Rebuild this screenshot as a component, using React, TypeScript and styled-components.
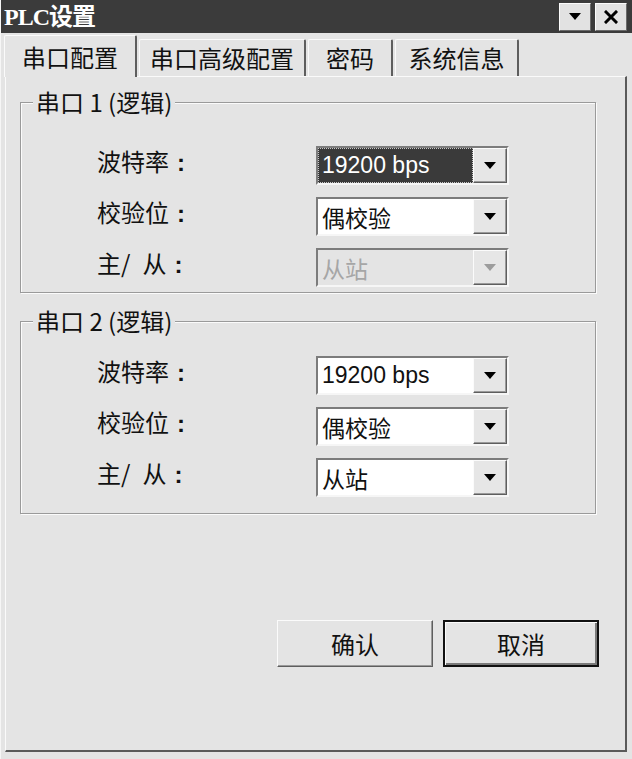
import React from "react";
import styled, { createGlobalStyle } from "styled-components";

const GlobalStyle = createGlobalStyle`
  html, body { margin: 0; padding: 0; background: #e4e4e4; }
  body { font-family: "Noto Sans CJK SC", "Liberation Sans", sans-serif; color: #111; }
`;

const Window = styled.div`
  width: 632px;
  height: 759px;
  box-sizing: border-box;
  display: flex;
  flex-direction: column;
  background: #e4e4e4;
  border-left: 1px solid #f6f6f6;
  overflow: hidden;
`;

const TitleBar = styled.div`
  height: 33px;
  flex: none;
  background: #3b3b3b;
  display: flex;
  align-items: center;
  justify-content: space-between;
  padding: 0 5px 0 3px;
`;

const Title = styled.div`
  color: #fff;
  font: bold 24px/1 "Liberation Serif", "Noto Sans CJK SC", serif;
  letter-spacing: -1px;
`;

const TitleButtons = styled.div`
  display: flex;
  gap: 4px;
`;

const TitleButton = styled.div`
  width: 32px;
  height: 28px;
  box-sizing: border-box;
  background: #e2e2e2;
  border: 1px solid;
  border-color: #fbfbfb #6a6a6a #6a6a6a #fbfbfb;
  display: flex;
  align-items: center;
  justify-content: center;
`;

const TabStrip = styled.div`
  height: 43px;
  flex: none;
  display: flex;
  align-items: flex-end;
  gap: 2px;
  padding-left: 3px;
  position: relative;
  z-index: 1;
`;

const Tab = styled.div<{ $w: number; $active?: boolean }>`
  width: ${(p) => p.$w}px;
  height: ${(p) => (p.$active ? 42 : 37)}px;
  margin-bottom: ${(p) => (p.$active ? -1 : 0)}px;
  box-sizing: border-box;
  display: flex;
  align-items: center;
  justify-content: center;
  background: #e4e4e4;
  border-top: 1px solid #fafafa;
  border-left: 1px solid #fafafa;
  border-right: 2px solid #5e5e5e;
  border-radius: 2px 2px 0 0;
  font-size: 24px;
  line-height: 1;
  color: #111;
`;

const Panel = styled.div`
  flex: 1;
  margin: 0 5px 7px 4px;
  box-sizing: border-box;
  border-top: 1px solid #fafafa;
  border-left: 1px solid #fafafa;
  border-right: 2px solid #5a5a5a;
  border-bottom: 2px solid #5a5a5a;
  padding: 11px 26px 0 14px;
  display: flex;
  flex-direction: column;
`;

const Group = styled.fieldset<{ $gapTop?: number }>`
  margin: ${(p) => p.$gapTop ?? 0}px 3px 0 0;
  padding: 0;
  min-inline-size: auto;
  border: 1px solid #9a9a9a;
  box-shadow: inset 1px 1px 0 #fbfbfb, 1px 1px 0 #fbfbfb;
`;

const Legend = styled.legend`
  margin-left: 12px;
  padding: 0 3px;
  font-size: 24px;
  line-height: 28px;
  background: #e4e4e4;
  color: #111;
`;

const Rows = styled.div<{ $padTop: number; $padBottom: number }>`
  display: grid;
  grid-template-columns: 219px 193px;
  row-gap: 12px;
  align-items: start;
  padding: ${(p) => p.$padTop}px 0 ${(p) => p.$padBottom}px 76px;
`;

const Label = styled.div`
  font-size: 24px;
  line-height: 30px;
  color: #111;
  white-space: pre;
`;

const Colon = styled.span`
  font-family: "Liberation Sans", sans-serif;
  font-weight: bold;
  margin-left: 8px;
`;

const Combo = styled.div`
  width: 193px;
  height: 39px;
  box-sizing: border-box;
  display: flex;
  border: 2px solid;
  border-color: #7c7c7c #f6f6f6 #f6f6f6 #7c7c7c;
`;

type FieldKind = "normal" | "selected" | "disabled";

const Field = styled.div<{ $kind: FieldKind }>`
  flex: 1;
  display: flex;
  align-items: center;
  padding-left: 4px;
  font-family: "Liberation Sans", "Noto Sans CJK SC", sans-serif;
  font-size: 23px;
  background: ${(p) =>
    p.$kind === "selected" ? "#3a3a3a" : p.$kind === "disabled" ? "#e4e4e4" : "#ffffff"};
  color: ${(p) =>
    p.$kind === "selected" ? "#ffffff" : p.$kind === "disabled" ? "#a6a6a6" : "#111"};
  outline: ${(p) => (p.$kind === "selected" ? "1px dotted #c8c8c8" : "none")};
  outline-offset: -1px;
`;

const ArrowButton = styled.div`
  width: 34px;
  flex: none;
  box-sizing: border-box;
  background: #e6e6e6;
  border: 1px solid;
  border-color: #fbfbfb #5e5e5e #5e5e5e #fbfbfb;
  box-shadow: inset -1px -1px 0 #9a9a9a;
  display: flex;
  align-items: center;
  justify-content: center;
`;

const ButtonRow = styled.div`
  display: flex;
  justify-content: flex-end;
  gap: 10px;
  margin-top: 106px;
`;

const DialogButton = styled.div<{ $default?: boolean }>`
  width: 156px;
  height: 47px;
  box-sizing: border-box;
  display: flex;
  align-items: center;
  justify-content: center;
  font-size: 24px;
  color: #111;
  background: #e4e4e4;
  border: ${(p) => (p.$default ? "2px solid #111" : "1px solid")};
  border-color: ${(p) => (p.$default ? "#111" : "#fbfbfb #5e5e5e #5e5e5e #fbfbfb")};
  box-shadow: ${(p) =>
    p.$default
      ? "inset 1px 1px 0 #fbfbfb, inset -2px -2px 0 #7a7a7a"
      : "inset -1px -1px 0 #9a9a9a"};
`;

const DownTriangle = ({ color = "#000" }: { color?: string }) => (
  <svg width="12" height="8" viewBox="0 0 12 8">
    <polygon points="0,0 12,0 6,7" fill={color} />
  </svg>
);

const CloseIcon = () => (
  <svg width="14" height="14" viewBox="0 0 14 14">
    <path d="M2 2 L12 12 M12 2 L2 12" stroke="#000" strokeWidth="3" strokeLinecap="square" />
  </svg>
);

type Row = { label: string; value: string; kind: FieldKind };

const SelectBox = ({ value, kind }: { value: string; kind: FieldKind }) => (
  <Combo>
    <Field $kind={kind}>{value}</Field>
    <ArrowButton>
      <DownTriangle color={kind === "disabled" ? "#9c9c9c" : "#000"} />
    </ArrowButton>
  </Combo>
);

const group1: Row[] = [
  { label: "波特率", value: "19200 bps", kind: "selected" },
  { label: "校验位", value: "偶校验", kind: "normal" },
  { label: "主/\u2002从", value: "从站", kind: "disabled" },
];

const group2: Row[] = [
  { label: "波特率", value: "19200 bps", kind: "normal" },
  { label: "校验位", value: "偶校验", kind: "normal" },
  { label: "主/\u2002从", value: "从站", kind: "normal" },
];

const tabs = [
  { name: "串口配置", w: 133, active: true },
  { name: "串口高级配置", w: 167 },
  { name: "密码", w: 85 },
  { name: "系统信息", w: 124 },
];

const FieldRows = ({ rows }: { rows: Row[] }) => (
  <>
    {rows.map((r) => (
      <React.Fragment key={r.label}>
        <Label>
          {r.label}
          <Colon>:</Colon>
        </Label>
        <SelectBox value={r.value} kind={r.kind} />
      </React.Fragment>
    ))}
  </>
);

export default function App() {
  return (
    <>
      <GlobalStyle />
      <Window>
        <TitleBar>
          <Title>PLC设置</Title>
          <TitleButtons>
            <TitleButton>
              <DownTriangle />
            </TitleButton>
            <TitleButton>
              <CloseIcon />
            </TitleButton>
          </TitleButtons>
        </TitleBar>
        <TabStrip>
          {tabs.map((t) => (
            <Tab key={t.name} $w={t.w} $active={t.active}>
              {t.name}
            </Tab>
          ))}
        </TabStrip>
        <Panel>
          <Group>
            <Legend>串口 1 (逻辑)</Legend>
            <Rows $padTop={30} $padBottom={5}>
              <FieldRows rows={group1} />
            </Rows>
          </Group>
          <Group $gapTop={14}>
            <Legend>串口 2 (逻辑)</Legend>
            <Rows $padTop={21} $padBottom={16}>
              <FieldRows rows={group2} />
            </Rows>
          </Group>
          <ButtonRow>
            <DialogButton>确认</DialogButton>
            <DialogButton $default>取消</DialogButton>
          </ButtonRow>
        </Panel>
      </Window>
    </>
  );
}
